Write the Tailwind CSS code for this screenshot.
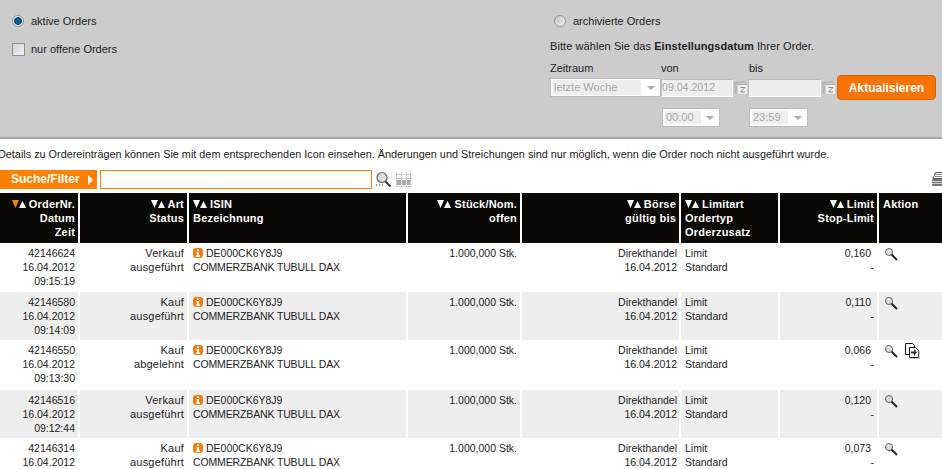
<!DOCTYPE html>
<html lang="de">
<head>
    <meta charset="UTF-8">
    <title>Orderbuch</title>
    <script src="https://cdn.jsdelivr.net/npm/@tailwindcss/browser@4"></script>
</head>
<body class="w-[942px] h-[469px] overflow-hidden bg-white font-['Liberation_Sans',Arial,sans-serif] text-[10.5px] leading-[14px] text-[#222]">
    <!-- Filter panel -->
    <section class="h-[139px] bg-[#cccccc] border-b-2 border-[#a3a3a3] flex text-[11px]">
        <div class="w-[550px] pl-[12px] pt-[14px]">
            <label class="flex items-center h-[14px]">
                <span class="w-[12px] h-[12px] rounded-full bg-[#eeeeee] border border-[#8f8f8f] flex items-center justify-center"><span class="w-[8px] h-[8px] rounded-full bg-[#0a5f9e] border border-[#0b3f66]"></span></span>
                <span class="ml-[7px]">aktive Orders</span>
            </label>
            <label class="flex items-center h-[14px] mt-[14px]">
                <span class="w-[13px] h-[13px] bg-gradient-to-br from-[#d4d4d4] to-[#f2f2f2] border border-[#8c8c8c]"></span>
                <span class="ml-[6px]">nur offene Orders</span>
            </label>
        </div>
        <div class="flex-1 pt-[14px]">
            <label class="flex items-center h-[14px] ml-[4px]">
                <span class="w-[12px] h-[12px] rounded-full bg-gradient-to-br from-[#c4c4c4] to-[#eeeeee] border border-[#9a9a9a]"></span>
                <span class="ml-[7px]">archivierte Orders</span>
            </label>
            <p class="mt-[11px] tracking-[.07px]">Bitte wählen Sie das <b>Einstellungsdatum</b> Ihrer Order.</p>
            <div class="grid grid-cols-[111px_88px_88px_100px] mt-[8px] h-[14px]">
                <span>Zeitraum</span><span>von</span><span>bis</span>
            </div>
            <div class="flex items-start h-[26px]">
                <div class="w-[111px] h-[19px] mt-[3px] bg-white border border-[#bbb] flex items-center pl-[2px] pr-[5px] text-[#a8a8a8]">
                    <span class="w-[88px] bg-[#eee] pl-[1px] leading-[15px]">letzte Woche</span>
                    <span class="ml-auto w-0 h-0 border-x-[4px] border-x-transparent border-t-[4px] border-t-[#aaa]"></span>
                </div>
                <div class="w-[72px] h-[18px] mt-[4px] bg-[#eee] border border-[#bdbdbd] border-b-white border-r-white text-[#a8a8a8] text-[10.6px] leading-[14px]">09.04.2012</div>
                <svg class="w-[15px] h-[14px] mt-[6px]" viewBox="0 0 15 14"><path d="M1 1h11M1 3h5M1 5h3M1 7h3M1 9h3M1 11h3" stroke="#aaa" fill="none"/><rect x="5" y="4" width="9" height="9" fill="#f2f2f2"/><path d="M5 3.500h9" stroke="#aaa"/><path d="M7.500 6.500h4.500l-4.500 4.500h4.500" stroke="#888" fill="none"/></svg>
                <div class="w-[73px] h-[18px] mt-[4px] bg-[#eee] border border-[#bdbdbd] border-b-white border-r-white"></div>
                <svg class="w-[15px] h-[14px] mt-[6px]" viewBox="0 0 15 14"><path d="M1 1h11M1 3h5M1 5h3M1 7h3M1 9h3M1 11h3" stroke="#aaa" fill="none"/><rect x="5" y="4" width="9" height="9" fill="#f2f2f2"/><path d="M5 3.500h9" stroke="#aaa"/><path d="M7.500 6.500h4.500l-4.500 4.500h4.500" stroke="#888" fill="none"/></svg>
                <button class="w-[99px] h-[25px] ml-[1px] bg-[#f97306] border border-[#d96400] rounded-[4px] text-white font-bold text-[12px]">Aktualisieren</button>
            </div>
            <div class="flex h-[19px] mt-[7px] ml-[112px] text-[#a8a8a8]">
                <div class="w-[58px] bg-white border border-[#bbb] flex items-center pl-[2px] pr-[5px]">
                    <span class="w-[36px] bg-[#eee] pl-[1px] leading-[13px]">00:00</span>
                    <span class="ml-auto w-0 h-0 border-x-[4px] border-x-transparent border-t-[4px] border-t-[#aaa]"></span>
                </div>
                <div class="w-[59px] ml-[29px] bg-white border border-[#bbb] flex items-center pl-[2px] pr-[5px]">
                    <span class="w-[36px] bg-[#eee] pl-[1px] leading-[13px]">23:59</span>
                    <span class="ml-auto w-0 h-0 border-x-[4px] border-x-transparent border-t-[4px] border-t-[#aaa]"></span>
                </div>
            </div>
        </div>
    </section>

    <p class="mt-[8px] -ml-[2px] whitespace-nowrap text-[10.85px]">Details zu Ordereinträgen können Sie mit dem entsprechenden Icon einsehen. Änderungen und Streichungen sind nur möglich, wenn die Order noch nicht ausgeführt wurde.</p>

    <!-- Search bar -->
    <div class="flex items-center h-[19px] mt-[9px]">
        <div class="w-[97px] h-[19px] bg-[#ff7f00] text-white font-bold text-[12px] leading-[19px] pl-[11px] flex items-center">Suche/Filter<span class="ml-[8px] w-0 h-0 border-y-[5px] border-y-transparent border-l-[5px] border-l-white"></span></div>
        <div class="w-[272px] h-[19px] ml-[3px] bg-white border border-[#ff7f00]"></div>
        <svg class="w-[17px] h-[17px] ml-[3px]" viewBox="0 0 17 17"><circle cx="7" cy="6.500" r="5" fill="#ddd" stroke="#666" stroke-width="1.200"/><path d="M10.500 10.500l5 5" stroke="#333" stroke-width="2"/><path d="M1 14h1M4 14h1M7 14h1" stroke="#222"/></svg>
        <svg class="w-[15px] h-[16px] ml-[4px]" viewBox="0 0 15 16"><path d="M.5 0v15M5.500 0v15M10.500 0v15M14.500 0v15M0 2.500h15M0 6.500h15M0 14.500h15" stroke="#ccc" fill="none"/><path d="M1 8h13v5H1z" fill="#aaa"/><path d="M5.500 8v5M10.500 8v5" stroke="#eee"/></svg>
        <svg class="w-[12px] h-[15px] ml-auto -mr-[2px]" viewBox="0 0 12 15"><path d="M3.500 .5h8.500v6H1z" fill="#fff" stroke="#555"/><path d="M3 2.500h9M3 4.500h9" stroke="#888"/><rect x="0" y="7" width="12" height="7" rx="1.500" fill="#777"/><path d="M0 9.500h12M0 11.500h12" stroke="#ccc"/></svg>
    </div>

    <!-- Orders table -->
    <table class="mt-[4px] w-[942px] table-fixed border-collapse">
        <colgroup>
            <col class="w-[79px]"><col class="w-[109px]"><col class="w-[219px]"><col class="w-[114px]">
            <col class="w-[159px]"><col class="w-[99px]"><col class="w-[99px]"><col class="w-[64px]">
        </colgroup>
        <thead id="head" class="bg-[#0a0804] text-white font-bold text-[11px] tracking-[.2px]"></thead>
        <tbody id="rows"></tbody>
    </table>

    <script>
        const arrows = (active) => `<svg class="inline-block w-[14px] h-[8px] mr-[3px] align-[0px]" viewBox="0 0 14 8"><path d="M0 0h7L3.500 8z" fill="${active ? '#ff7f00' : '#fff'}"/><path d="M7 8h7L10.500 1z" fill="#fff"/></svg>`;

        const headers = [
            ['text-right', 'OrderNr.', 'Datum', 'Zeit'],
            ['text-right', 'Art', 'Status'],
            ['text-left', 'ISIN', 'Bezeichnung'],
            ['text-right', 'Stück/Nom.', 'offen'],
            ['text-right', 'Börse', 'gültig bis'],
            ['text-left', 'Limitart', 'Ordertyp', 'Orderzusatz'],
            ['text-right', 'Limit', 'Stop-Limit'],
        ];
        document.getElementById('head').innerHTML = '<tr class="h-[50px]">' + headers.map(([align, first, ...rest], i) =>
            `<th class="${align} align-top font-bold pt-[4px] pb-[3px] pl-[4px] pr-[3px] border-r-2 border-white">${arrows(i === 0)}${first}${rest.map(t => '<br>' + t).join('')}</th>`
        ).join('') + '<th class="text-left align-top font-bold pt-[4px] px-[4px]">Aktion</th></tr>';

        const info = '<svg class="inline-block w-[10px] h-[10px] mr-[3px] align-[-1px]" viewBox="0 0 10 10"><rect width="10" height="10" rx="3" fill="#f07c12"/><path d="M4 1.500h2v1.500H4zM3.500 4H6v3.500h1V9H3V7.500h1V5.500h-.5z" fill="#fff"/></svg>';
        const lens = '<svg class="inline-block w-[14px] h-[14px]" viewBox="0 0 14 14"><circle cx="5" cy="5" r="3.500" fill="#ddd" stroke="#666"/><path d="M3.500 3.500h2" stroke="#fff"/><path d="M7.500 7.500l5.500 5.500" stroke="#222" stroke-width="2"/></svg>';
        const copy = '<svg class="inline-block w-[15px] h-[16px] ml-[7px]" viewBox="0 0 15 16"><path d="M.5.500h7l2 2v9h-9z" fill="#fff" stroke="#111"/><path d="M4.500 4.500h6l3 3v7h-9z" fill="#fff" stroke="#111"/><path d="M14 8v8H6" stroke="#999" fill="none"/><path d="M6 8.500h3V6l3 3.500-3 3.500v-2.500H6z" fill="#333"/></svg>';

        const orders = [
            ['42146624', '09:15:19', 'Verkauf', 'ausgeführt', '0,160', false, 'h-[49px]'],
            ['42146580', '09:14:09', 'Kauf', 'ausgeführt', '0,110', false, 'h-[48px]'],
            ['42146550', '09:13:30', 'Kauf', 'abgelehnt', '0,066', true, 'h-[50px]'],
            ['42146516', '09:12:44', 'Verkauf', 'ausgeführt', '0,120', false, 'h-[48px]'],
            ['42146314', '09:11:02', 'Kauf', 'ausgeführt', '0,073', false, 'h-[49px]'],
        ];
        const td = 'align-top pt-[3px] pl-[4px] pr-[3px] border-r-2 border-white';
        document.getElementById('rows').innerHTML = orders.map(([nr, time, art, status, limit, canCopy, height], i) => `
            <tr class="${height} ${i % 2 ? 'bg-[#eeeeee]' : 'bg-white'}">
                <td class="${td} text-right">${nr}<br>16.04.2012<br>${time}</td>
                <td class="${td} text-right text-[11px] tracking-[.2px]">${art}<br>${status}</td>
                <td class="${td}">${info}DE000CK6Y8J9<br><span class="tracking-[-.14px]">COMMERZBANK TUBULL DAX</span></td>
                <td class="${td} text-right">1.000,000 Stk.</td>
                <td class="${td} text-right !pr-[2px]">Direkthandel<br>16.04.2012</td>
                <td class="${td}">Limit<br>Standard</td>
                <td class="${td} text-right"><span class="pr-[3px]">${limit}</span><br>-</td>
                <td class="align-top pt-[3px] px-[5px] whitespace-nowrap">${lens}${canCopy ? copy : ''}</td>
            </tr>`).join('');
    </script>
</body>
</html>
